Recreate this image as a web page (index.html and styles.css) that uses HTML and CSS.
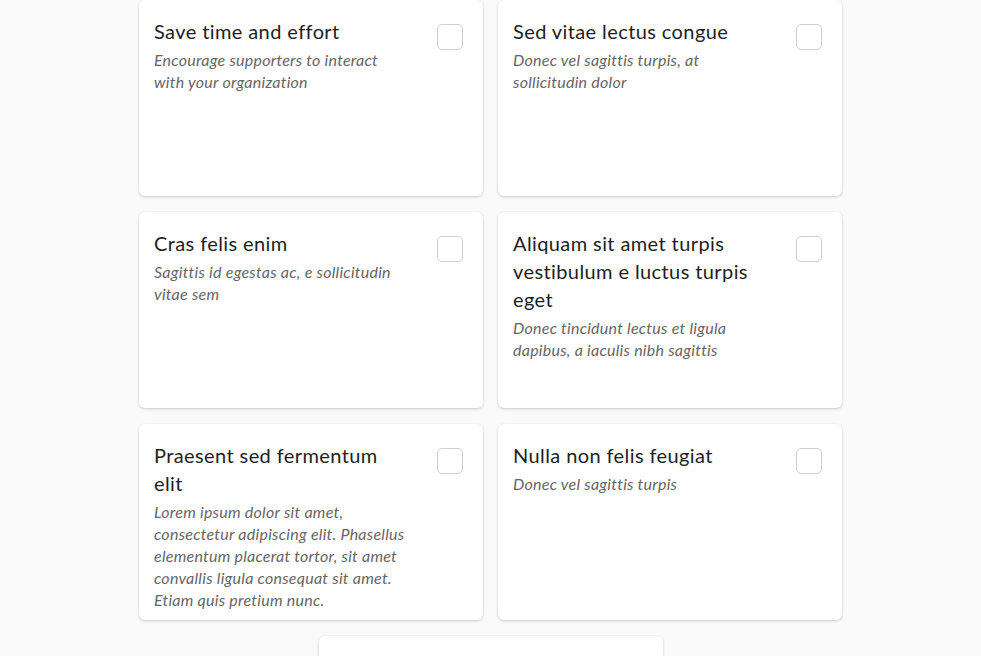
FILE: index.html
```html
<!DOCTYPE html>
<html lang="en">
<head>
<meta charset="utf-8">
<title>Options</title>
<link rel="stylesheet" href="styles.css">
</head>
<body>
<main class="page">
  <div class="grid">
    <label class="card">
      <div class="text">
        <div class="title">Save time and effort</div>
        <div class="desc">Encourage supporters to interact with your organization</div>
      </div>
      <span class="box"></span>
    </label>
    <label class="card">
      <div class="text">
        <div class="title">Sed vitae lectus congue</div>
        <div class="desc">Donec vel sagittis turpis, at sollicitudin dolor</div>
      </div>
      <span class="box"></span>
    </label>
    <label class="card">
      <div class="text">
        <div class="title">Cras felis enim</div>
        <div class="desc">Sagittis id egestas ac, e sollicitudin vitae sem</div>
      </div>
      <span class="box"></span>
    </label>
    <label class="card">
      <div class="text">
        <div class="title">Aliquam sit amet turpis vestibulum e luctus turpis eget</div>
        <div class="desc">Donec tincidunt lectus et ligula dapibus, a iaculis nibh sagittis</div>
      </div>
      <span class="box"></span>
    </label>
    <label class="card">
      <div class="text">
        <div class="title">Praesent sed fermentum elit</div>
        <div class="desc">Lorem ipsum dolor sit amet, consectetur adipiscing elit. Phasellus elementum placerat tortor, sit amet convallis ligula consequat sit amet. Etiam quis pretium nunc.</div>
      </div>
      <span class="box"></span>
    </label>
    <label class="card">
      <div class="text">
        <div class="title">Nulla non felis feugiat</div>
        <div class="desc">Donec vel sagittis turpis</div>
      </div>
      <span class="box"></span>
    </label>
  </div>
  <div class="last-row">
    <label class="card">
      <div class="text">
        <div class="title">&nbsp;</div>
      </div>
    </label>
  </div>
</main>
</body>
</html>
```

FILE: styles.css
```css
* { box-sizing: border-box; }
html, body {
  margin: 0;
  padding: 0;
  background: #fafafa;
  font-family: Lato, "Open Sans", sans-serif;
  overflow: hidden;
}
.page {
  width: 703px;
  margin: 0 auto;
}
.grid {
  display: grid;
  grid-template-columns: 344px 344px;
  column-gap: 15px;
  row-gap: 16px;
}
.last-row {
  display: flex;
  justify-content: center;
  margin-top: 16px;
}
.card {
  display: flex;
  justify-content: space-between;
  align-items: flex-start;
  width: 344px;
  height: 196px;
  background: #fff;
  border-radius: 6px;
  box-shadow: 0 1px 3px rgba(0, 0, 0, 0.2);
  padding: 17px 20px 0 15px;
}
.text {
  width: 256px;
}
.title {
  font-size: 20px;
  line-height: 28px;
  letter-spacing: 0.4px;
  color: #1e1e1e;
}
.desc {
  margin-top: 4px;
  font-size: 16px;
  line-height: 22px;
  letter-spacing: 0.25px;
  font-style: italic;
  color: #666;
}
.box {
  flex: none;
  width: 26px;
  height: 26px;
  margin-top: 7px;
  border: 1px solid #cfcfcf;
  border-radius: 5px;
  background: #fff;
}
```
